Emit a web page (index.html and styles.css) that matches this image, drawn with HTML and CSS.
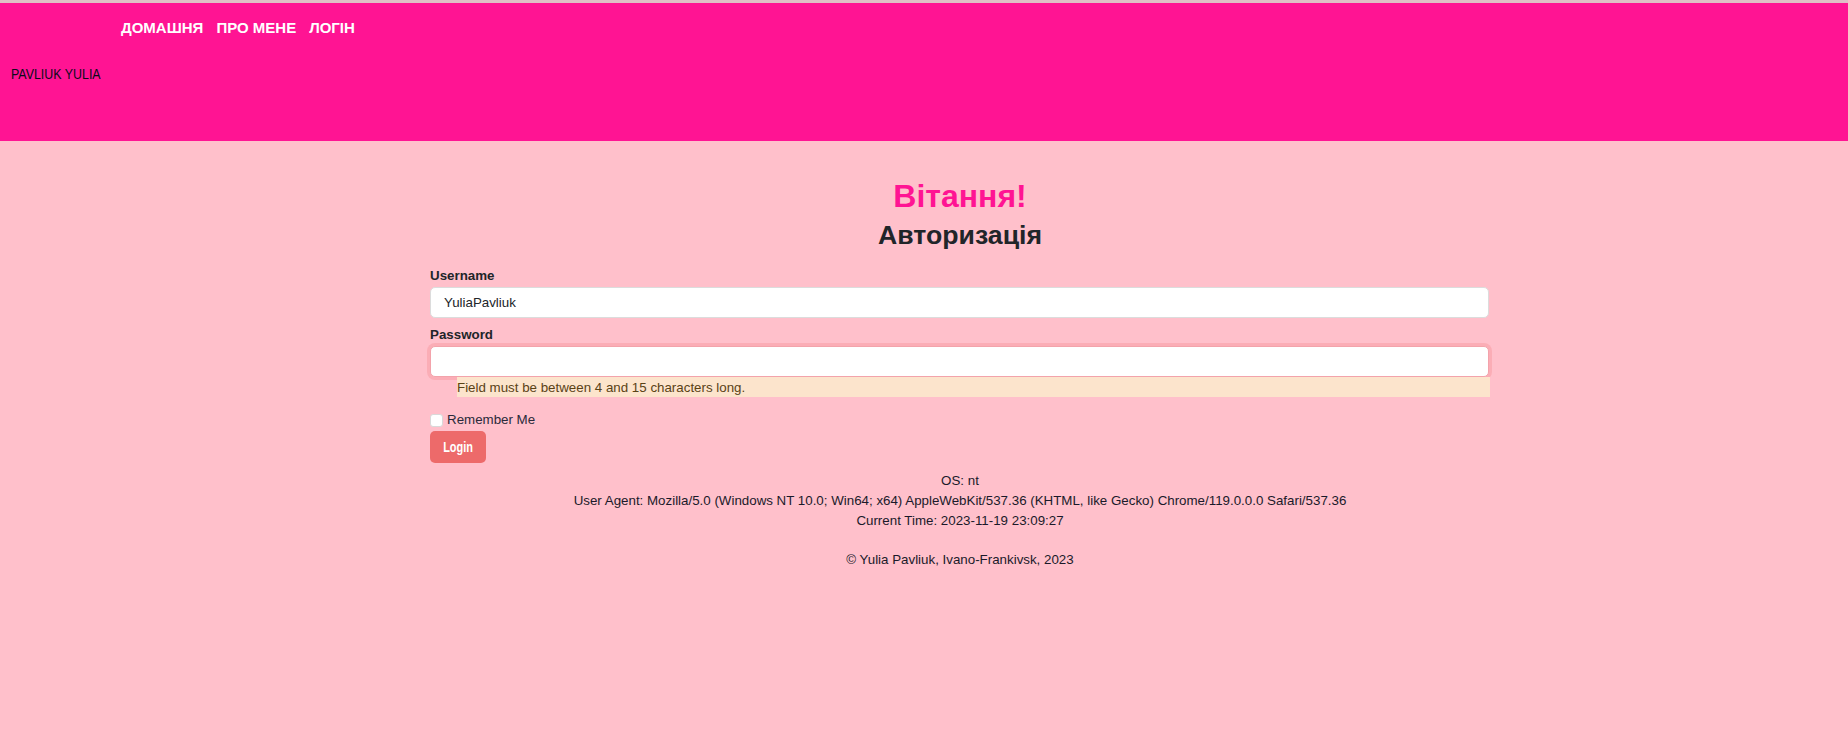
FILE: index.html
```html
<!DOCTYPE html>
<html lang="uk">
<head>
<meta charset="utf-8">
<title>Login</title>
<link rel="stylesheet" href="styles.css">
</head>
<body>
<div class="topline"></div>
<header class="header">
  <nav class="nav">
    <a href="#" class="nav-link">ДОМАШНЯ</a>
    <a href="#" class="nav-link">ПРО МЕНЕ</a>
    <a href="#" class="nav-link">ЛОГІН</a>
  </nav>
  <div class="brand"><span class="brand-text">PAVLIUK YULIA</span></div>
</header>
<main class="main">
  <div class="container">
    <h1 class="title">Вітання!</h1>
    <h2 class="subtitle">Авторизація</h2>
    <form class="form">
      <div class="group">
        <label class="label" for="username">Username</label>
        <input class="input" id="username" type="text" value="YuliaPavliuk">
      </div>
      <div class="group">
        <label class="label" for="password">Password</label>
        <input class="input input-invalid" id="password" type="password">
        <div class="error">Field must be between 4 and 15 characters long.</div>
      </div>
      <div class="check-row">
        <input class="check" id="remember" type="checkbox">
        <label class="check-label" for="remember">Remember Me</label>
      </div>
      <button class="btn" type="button"><span class="btn-text">Login</span></button>
    </form>
    <div class="info">
      <div class="info-line">OS: nt</div>
      <div class="info-line">User Agent: Mozilla/5.0 (Windows NT 10.0; Win64; x64) AppleWebKit/537.36 (KHTML, like Gecko) Chrome/119.0.0.0 Safari/537.36</div>
      <div class="info-line">Current Time: 2023-11-19 23:09:27</div>
    </div>
    <footer class="footer">© Yulia Pavliuk, Ivano-Frankivsk, 2023</footer>
  </div>
</main>
</body>
</html>
```

FILE: styles.css
```css
* { box-sizing: border-box; }
html, body {
  margin: 0;
  padding: 0;
}
body {
  background: #ffc0cb;
  font-family: "Liberation Sans", Arial, sans-serif;
  color: #212529;
  font-size: 13.33px;
  min-height: 752px;
}
.topline {
  height: 3px;
  background: #dfc0c6;
}
.header {
  background: #ff1493;
  height: 138px;
  padding-top: 16px;
}
.nav {
  display: flex;
  gap: 13px;
  padding-left: 121px;
}
.nav-link {
  color: #fff;
  text-decoration: none;
  font-weight: bold;
  font-size: 15px;
  line-height: 18px;
}
.brand {
  margin-top: 28px;
  padding-left: 11px;
  font-size: 15.5px;
  line-height: 18px;
  color: #0a0a1a;
}
.brand-text {
  display: inline-block;
  transform: scaleX(0.8);
  transform-origin: left center;
  white-space: nowrap;
}
.main {
  padding-left: 72px;
}
.container {
  width: 1060px;
  margin: 0 auto;
  padding-top: 37px;
}
.title {
  margin: 0;
  text-align: center;
  color: #ff1493;
  font-size: 32px;
  line-height: 36px;
  font-weight: bold;
}
.subtitle {
  margin: 6px 0 0;
  text-align: center;
  color: #212529;
  font-size: 26.67px;
  line-height: 30px;
  font-weight: bold;
}
.form {
  margin-top: 18px;
}
.group {
  margin-bottom: 9px;
}
.label {
  display: block;
  font-weight: bold;
  font-size: 13.33px;
  line-height: 16px;
  margin-bottom: 3px;
}
.input {
  display: block;
  width: 1059px;
  height: 31px;
  border: 1px solid #dcdcdc;
  border-radius: 5px;
  background: #fff;
  padding: 0 13px;
  font-family: "Liberation Sans", Arial, sans-serif;
  font-size: 13.33px;
  color: #212529;
  outline: none;
}
.input-invalid {
  border-color: #f3a3ab;
  box-shadow: 0 0 0 3px #fbadb6;
}
.error {
  margin-left: 27px;
  width: 1033px;
  height: 20px;
  line-height: 21px;
  background: #fce4cc;
  color: #5a4216;
  font-size: 13.33px;
}
.check-row {
  display: flex;
  align-items: center;
  gap: 4px;
  margin-top: 15px;
  height: 16px;
}
.check {
  appearance: none;
  -webkit-appearance: none;
  margin: 1px 0 0;
  width: 13px;
  height: 13px;
  border: 1px solid #d9d9d9;
  border-radius: 3px;
  background: #fff;
}
.check-label {
  font-size: 13.33px;
  line-height: 16px;
  color: #2a2a3a;
}
.btn {
  display: block;
  margin-top: 3px;
  width: 56px;
  height: 32px;
  border: none;
  border-radius: 5px;
  background: #ed6a6a;
  color: #fff;
  font-family: "Liberation Sans", Arial, sans-serif;
  font-weight: bold;
  font-size: 14px;
  padding: 0;
}
.btn-text {
  display: inline-block;
  transform: scaleX(0.78);
}
.info {
  margin-top: 8px;
  text-align: center;
}
.info-line {
  font-size: 13.33px;
  line-height: 20px;
  color: #1a1a2a;
}
.footer {
  margin-top: 19px;
  text-align: center;
  font-size: 13.33px;
  line-height: 20px;
  color: #1a1a2a;
}
```
